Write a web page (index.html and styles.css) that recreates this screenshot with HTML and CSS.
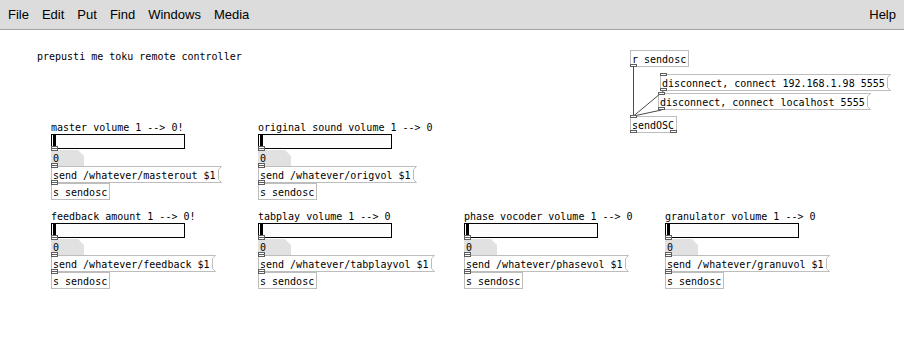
FILE: index.html
```html
<!DOCTYPE html>
<html>
<head>
<meta charset="utf-8">
<link rel="stylesheet" href="styles.css">
</head>
<body>
<header class="menubar">
  <nav class="menus"><span>File</span><span>Edit</span><span>Put</span><span>Find</span><span>Windows</span><span>Media</span></nav>
  <span class="help">Help</span>
</header>
<main class="canvas">
  <p class="comment">prepusti me toku remote controller</p>
  <section class="modules">
    <div class="module">
      <div class="label">master volume 1 --&gt; 0!</div>
      <div class="slider"><i class="knob"></i><i class="nub out"></i></div>
      <div class="num"><i class="nub in up"></i>0<i class="nub out"></i></div>
      <div class="msg"><i class="nub in"></i>send /whatever/masterout $1<i class="nub out"></i><svg class="flag" width="4" height="17" viewBox="0 0 4 17"><polyline points="0,0.5 3.5,0.5 0.5,3.5 0.5,13.5 3.5,16.5 0,16.5"/></svg></div>
      <div class="obj"><i class="nub in"></i>s sendosc</div>
    </div>
    <div class="module">
      <div class="label">original sound volume 1 --&gt; 0</div>
      <div class="slider"><i class="knob"></i><i class="nub out"></i></div>
      <div class="num"><i class="nub in up"></i>0<i class="nub out"></i></div>
      <div class="msg"><i class="nub in"></i>send /whatever/origvol $1<i class="nub out"></i><svg class="flag" width="4" height="17" viewBox="0 0 4 17"><polyline points="0,0.5 3.5,0.5 0.5,3.5 0.5,13.5 3.5,16.5 0,16.5"/></svg></div>
      <div class="obj"><i class="nub in"></i>s sendosc</div>
    </div>
    <div class="module row-start">
      <div class="label">feedback amount 1 --&gt; 0!</div>
      <div class="slider"><i class="knob"></i><i class="nub out"></i></div>
      <div class="num"><i class="nub in up"></i>0<i class="nub out"></i></div>
      <div class="msg"><i class="nub in"></i>send /whatever/feedback $1<i class="nub out"></i><svg class="flag" width="4" height="17" viewBox="0 0 4 17"><polyline points="0,0.5 3.5,0.5 0.5,3.5 0.5,13.5 3.5,16.5 0,16.5"/></svg></div>
      <div class="obj"><i class="nub in"></i>s sendosc</div>
    </div>
    <div class="module">
      <div class="label">tabplay volume 1 --&gt; 0</div>
      <div class="slider"><i class="knob"></i><i class="nub out"></i></div>
      <div class="num"><i class="nub in up"></i>0<i class="nub out"></i></div>
      <div class="msg"><i class="nub in"></i>send /whatever/tabplayvol $1<i class="nub out"></i><svg class="flag" width="4" height="17" viewBox="0 0 4 17"><polyline points="0,0.5 3.5,0.5 0.5,3.5 0.5,13.5 3.5,16.5 0,16.5"/></svg></div>
      <div class="obj"><i class="nub in"></i>s sendosc</div>
    </div>
    <div class="module">
      <div class="label">phase vocoder volume 1 --&gt; 0</div>
      <div class="slider"><i class="knob"></i><i class="nub out"></i></div>
      <div class="num"><i class="nub in up"></i>0<i class="nub out"></i></div>
      <div class="msg"><i class="nub in"></i>send /whatever/phasevol $1<i class="nub out"></i><svg class="flag" width="4" height="17" viewBox="0 0 4 17"><polyline points="0,0.5 3.5,0.5 0.5,3.5 0.5,13.5 3.5,16.5 0,16.5"/></svg></div>
      <div class="obj"><i class="nub in"></i>s sendosc</div>
    </div>
    <div class="module">
      <div class="label">granulator volume 1 --&gt; 0</div>
      <div class="slider"><i class="knob"></i><i class="nub out"></i></div>
      <div class="num"><i class="nub in up"></i>0<i class="nub out"></i></div>
      <div class="msg"><i class="nub in"></i>send /whatever/granuvol $1<i class="nub out"></i><svg class="flag" width="4" height="17" viewBox="0 0 4 17"><polyline points="0,0.5 3.5,0.5 0.5,3.5 0.5,13.5 3.5,16.5 0,16.5"/></svg></div>
      <div class="obj"><i class="nub in"></i>s sendosc</div>
    </div>
  </section>
  <section class="osc">
    <svg class="wires" width="60" height="90" viewBox="0 0 60 90">
      <line x1="3.5" y1="17" x2="3.5" y2="66"/>
      <line x1="33.5" y1="41" x2="3.5" y2="66"/>
      <line x1="31.5" y1="60" x2="3.5" y2="66"/>
    </svg>
    <div class="obj"><i class="nub out"></i>r sendosc</div>
    <div class="msg m1"><i class="nub in"></i>disconnect, connect 192.168.1.98 5555<i class="nub out"></i><svg class="flag" width="4" height="17" viewBox="0 0 4 17"><polyline points="0,0.5 3.5,0.5 0.5,3.5 0.5,13.5 3.5,16.5 0,16.5"/></svg></div>
    <div class="msg m2"><i class="nub in"></i>disconnect, connect localhost 5555<i class="nub out"></i><svg class="flag" width="4" height="17" viewBox="0 0 4 17"><polyline points="0,0.5 3.5,0.5 0.5,3.5 0.5,13.5 3.5,16.5 0,16.5"/></svg></div>
    <div class="obj send"><i class="nub in"></i>sendOSC<i class="nub out"></i><i class="nub out right"></i></div>
  </section>
</main>
</body>
</html>
```
FILE: styles.css
```css
html, body {
  margin: 0;
  padding: 0;
  background: #fff;
}
body {
  width: 904px;
  height: 346px;
  overflow: hidden;
}
.menubar {
  height: 29px;
  border-bottom: 1px solid #a3a3a3;
  background: #dcdcdc;
  display: flex;
  justify-content: space-between;
  align-items: center;
  padding: 0 8px;
  font-family: "Liberation Sans", Arial, sans-serif;
  font-size: 13px;
  color: #000;
}
.menus {
  display: flex;
  gap: 13px;
}
.canvas {
  position: relative;
  height: 316px;
  box-sizing: border-box;
  padding-top: 21px;
  font-family: "DejaVu Sans Mono", monospace;
  font-size: 10px;
  color: #000;
}
.comment {
  margin: 0 0 0 37px;
  line-height: 12px;
  white-space: pre;
}
.modules {
  margin: 59px 0 0 51px;
  display: grid;
  grid-template-columns: 207px 206px 201px 200px;
  row-gap: 11px;
}
.row-start {
  grid-column-start: 1;
}
.module {
  display: flex;
  flex-direction: column;
  align-items: flex-start;
}
.label {
  line-height: 12px;
  white-space: pre;
}
.slider {
  position: relative;
  width: 134px;
  height: 15px;
  box-sizing: border-box;
  border: 1px solid #000;
  background: #fcfcfc;
}
.knob {
  position: absolute;
  left: 1px;
  top: 0;
  bottom: 0;
  width: 3px;
  background: #000;
}
.num {
  position: relative;
  isolation: isolate;
  margin-top: 1px;
  width: 33px;
  height: 16px;
  box-sizing: border-box;
  border: 1px solid transparent;
  padding: 1px 0 0 1px;
  line-height: 14px;
}
.num::before {
  content: "";
  position: absolute;
  inset: -1px;
  background: #e1e1e1;
  clip-path: polygon(0 0, calc(100% - 6px) 0, 100% 6px, 100% 100%, 0 100%);
  z-index: -1;
}
.msg, .obj {
  position: relative;
  height: 17px;
  box-sizing: border-box;
  border: 1px solid #bdbdbd;
  padding: 2px 2px 0 1px;
  line-height: 13px;
  white-space: pre;
  background: #fff;
}
.msg {
  border-right: none;
  margin-right: 4px;
}
.flag {
  position: absolute;
  right: -4px;
  top: -1px;
  overflow: visible;
}
.flag polyline {
  fill: none;
  stroke: #bdbdbd;
  stroke-width: 1;
}
.nub {
  position: absolute;
  left: -1px;
  width: 7px;
  height: 3px;
  box-sizing: border-box;
  border: 1px solid #5e5e5e;
  background: #fff;
  z-index: 3;
}
.nub.in {
  top: -2px;
}
.nub.in.up {
  top: -3px;
}
.nub.out {
  bottom: -1px;
}
.nub.out.right {
  left: auto;
  right: -1px;
}
.osc {
  position: absolute;
  left: 630px;
  top: 20px;
  display: flex;
  flex-direction: column;
  align-items: flex-start;
}
.wires {
  position: absolute;
  left: 0;
  top: 0;
  z-index: 2;
  overflow: visible;
}
.wires line {
  stroke: #4a4a4a;
  stroke-width: 1;
}
.osc .obj, .osc .msg {
  background: transparent;
}
.m1 {
  margin: 7px 0 0 30px;
}
.m2 {
  margin: 2px 0 0 28px;
}
.send {
  margin-top: 6px;
}
```
